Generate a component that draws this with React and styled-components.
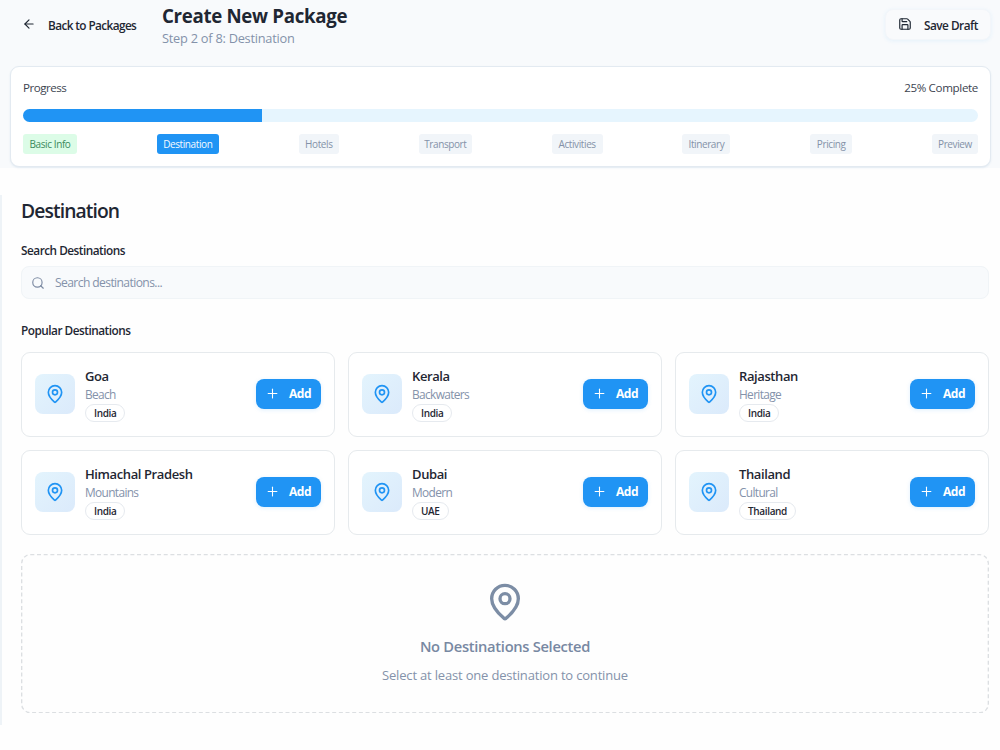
import styled, { createGlobalStyle } from 'styled-components'
import { ArrowLeft, MapPin, Plus, Save, Search } from 'lucide-react'

const GlobalStyle = createGlobalStyle`
  *,
  *::before {
    box-sizing: border-box;
  }

  body {
    background: #fefefe;
    color: #1f2733;
    font-family: 'Open Sans', 'Noto Sans', sans-serif;
    margin: 0;
  }

  button {
    border: none;
    color: inherit;
    font-family: inherit;
    margin: 0;
    padding: 0;
  }
`

const Text = styled.span`
  color: ${({ $color }) => $color || '#1f2733'};
  font-size: ${({ $size }) => $size}px;
  font-weight: ${({ $weight }) => $weight || 400};
  letter-spacing: ${({ $spacing }) => $spacing || 0}px;
  line-height: ${({ $line }) => $line || 18}px;
  margin: 0;
  white-space: nowrap;
`

const Page = styled.div`
  display: flex;
  flex-direction: column;
  gap: 27px;
  height: 750px;
  overflow: hidden;
`

const Top = styled.div`
  background: #f8fafc;
  height: 168px;
  padding: 0 9px 0 10px;
`

const Header = styled.header`
  display: flex;
  height: 66px;
  justify-content: space-between;
`

const HeaderLeft = styled.div`
  display: flex;
  gap: 25px;
`

const BackButton = styled.button`
  align-items: center;
  background: none;
  display: flex;
  gap: 12px;
  height: 30px;
  margin: 10px 0 0 12px;
  width: 115px;

  svg {
    margin-top: -2px;
  }
`

const Titles = styled.div`
  display: flex;
  flex-direction: column;
  padding-top: 3px;
`

const SaveButton = styled.button`
  align-items: center;
  background: #f9fafc;
  border: 1px solid #f3f6fa;
  border-radius: 8px;
  box-shadow: 0 1px 4px rgba(33, 150, 243, 0.09);
  display: flex;
  height: 31px;
  justify-content: space-between;
  margin-top: 9px;
  padding: 0 12px;
  width: 106px;

  svg {
    margin-top: -1px;
  }
`

const ProgressCard = styled.section`
  background: #fff;
  border: 1px solid #e3eaf1;
  border-radius: 9px;
  box-shadow: 0 1px 2px rgba(33, 100, 160, 0.1);
  display: flex;
  flex-direction: column;
  height: 101px;
  padding: 12px 12px 0;
`

const Row = styled.div`
  display: flex;
  justify-content: space-between;
`

const Track = styled.div`
  background: #e6f5fe;
  border-radius: 7px;
  height: 13px;
  margin: 11.5px 0 12.5px;
  overflow: hidden;
`

const Fill = styled.div`
  background: #2094f4;
  height: 100%;
`

const stepColors = {
  done: ['#dcfce7', '#3a8a5c'],
  current: ['#2094f4', '#f5faff'],
  next: ['#f1f5f9', '#8492a8'],
}

const StepBadge = styled.span`
  background: ${({ $state }) => stepColors[$state][0]};
  border-radius: 3px;
  color: ${({ $state }) => stepColors[$state][1]};
  font-size: 10px;
  height: 20px;
  letter-spacing: -0.4px;
  line-height: 20px;
  text-align: center;
  white-space: nowrap;
  width: ${({ $width }) => $width}px;
`

const Panel = styled.main`
  border-left: 2px solid #eef3f7;
  display: flex;
  flex-direction: column;
  height: 530px;
  padding: 0 11px 0 19px;
`

const SectionLabel = styled(Text)`
  margin-top: ${({ $top }) => $top || 0}px;
`

const SearchBox = styled.div`
  align-items: center;
  background: #f8fafc;
  border: 1px solid #f0f4f7;
  border-radius: 8px;
  display: flex;
  gap: 10px;
  height: 33px;
  margin: 7px 0 22px;
  padding: 0 9px;

  span {
    margin-top: 1px;
  }
`

const Grid = styled.div`
  display: grid;
  gap: 13px;
  grid-template-columns: repeat(3, 314px);
  grid-template-rows: 85px 85px;
  margin: 13px 0 19px;
`

const Card = styled.div`
  align-items: center;
  background: #fff;
  border: 1px solid #e6eaed;
  border-radius: 9px;
  display: flex;
  padding: 0 13px 2px;
`

const PinTile = styled.div`
  align-items: center;
  background: linear-gradient(135deg, #e3f4fd, #dbeafb);
  border-radius: 8px;
  display: flex;
  flex: none;
  height: 40px;
  justify-content: center;
  width: 40px;
`

const Info = styled.div`
  align-items: flex-start;
  display: flex;
  flex: 1;
  flex-direction: column;
  margin-left: 10px;
  padding-top: 2px;
`

const Country = styled.span`
  border: 1px solid #e6eaef;
  border-radius: 9px;
  font-size: 10px;
  font-weight: 600;
  height: 18px;
  letter-spacing: -0.35px;
  line-height: 16px;
  margin-top: 1px;
  padding: 0 8px;
`

const AddButton = styled.button`
  align-items: center;
  background: #2094f4;
  border-radius: 8px;
  box-shadow: 0 1px 4px rgba(33, 150, 243, 0.15);
  display: flex;
  height: 30px;
  justify-content: space-between;
  padding: 0 10px 0 9px;
  width: 65px;

  span {
    margin-top: 1px;
  }
`

// The dashed frame is drawn at 3:2 and scaled down, which gives finer dashes than a plain border
const Empty = styled.section`
  align-items: center;
  display: flex;
  flex-direction: column;
  height: 159px;
  padding-top: 28px;
  position: relative;

  &::before {
    border: 2px dashed #dcdfe2;
    border-radius: 14px;
    content: '';
    height: 150%;
    left: 0;
    position: absolute;
    top: 0;
    transform: scale(0.66667);
    transform-origin: 0 0;
    width: 150%;
  }
`

const EmptyTitle = styled(Text)`
  margin: 14px 0 9px;
`

const steps = [
  { label: 'Basic Info', state: 'done', width: 54 },
  { label: 'Destination', state: 'current', width: 62 },
  { label: 'Hotels', state: 'next', width: 40.5 },
  { label: 'Transport', state: 'next', width: 53 },
  { label: 'Activities', state: 'next', width: 51 },
  { label: 'Itinerary', state: 'next', width: 48 },
  { label: 'Pricing', state: 'next', width: 42 },
  { label: 'Preview', state: 'next', width: 46 },
]

const destinations = [
  { name: 'Goa', kind: 'Beach', country: 'India' },
  { name: 'Kerala', kind: 'Backwaters', country: 'India' },
  { name: 'Rajasthan', kind: 'Heritage', country: 'India' },
  { name: 'Himachal Pradesh', kind: 'Mountains', country: 'India' },
  { name: 'Dubai', kind: 'Modern', country: 'UAE' },
  { name: 'Thailand', kind: 'Cultural', country: 'Thailand' },
]

const progress = 25

const App = () => (
  <Page>
    <GlobalStyle />
    <Top>
      <Header>
        <HeaderLeft>
          <BackButton>
            <ArrowLeft size={14} />
            <Text $size={11.8} $weight={600} $spacing={-0.6}>
              Back to Packages
            </Text>
          </BackButton>
          <Titles>
            <Text as='h1' $size={18.7} $weight={700} $spacing={-0.32} $line={26}>
              Create New Package
            </Text>
            <Text $color='#8492aa' $size={12.8} $spacing={-0.25} $line={18}>
              Step 2 of 8: Destination
            </Text>
          </Titles>
        </HeaderLeft>
        <SaveButton>
          <Save size={14} />
          <Text $size={11.8} $weight={600} $spacing={-0.5}>
            Save Draft
          </Text>
        </SaveButton>
      </Header>
      <ProgressCard>
        <Row>
          <Text $color='#3c4450' $size={11.6} $spacing={-0.5}>
            Progress
          </Text>
          <Text $color='#3c4450' $size={11.6} $spacing={-0.35}>
            {progress}% Complete
          </Text>
        </Row>
        <Track>
          <Fill style={{ width: `${progress}%` }} />
        </Track>
        <Row>
          {steps.map(({ label, state, width }) => (
            <StepBadge key={label} $state={state} $width={width}>
              {label}
            </StepBadge>
          ))}
        </Row>
      </ProgressCard>
    </Top>
    <Panel>
      <Text as='h2' $size={19.3} $weight={600} $spacing={-0.9} $line={31}>
        Destination
      </Text>
      <SectionLabel $top={15} $size={11.8} $weight={600} $spacing={-0.5}>
        Search Destinations
      </SectionLabel>
      <SearchBox>
        <Search size={14} color='#7d8ba3' />
        <Text $color='#8492aa' $size={12.1} $spacing={-0.6}>
          Search destinations...
        </Text>
      </SearchBox>
      <SectionLabel $size={11.8} $weight={600} $spacing={-0.5}>
        Popular Destinations
      </SectionLabel>
      <Grid>
        {destinations.map(({ country, kind, name }) => (
          <Card key={name}>
            <PinTile>
              <MapPin size={20} color='#2094f4' />
            </PinTile>
            <Info>
              <Text $size={13} $weight={600} $spacing={-0.4}>
                {name}
              </Text>
              <Text $color='#8492aa' $size={11.9} $spacing={-0.65}>
                {kind}
              </Text>
              <Country>{country}</Country>
            </Info>
            <AddButton>
              <Plus size={15} color='#fff' strokeWidth={1.7} />
              <Text $color='#fff' $size={12} $weight={700} $spacing={-0.5}>
                Add
              </Text>
            </AddButton>
          </Card>
        ))}
      </Grid>
      <Empty>
        <MapPin size={40} color='#7c8da5' />
        <EmptyTitle $color='#7888a2' $size={14.7} $weight={600} $spacing={-0.3} $line={20}>
          No Destinations Selected
        </EmptyTitle>
        <Text $color='#8492aa' $size={13} $spacing={-0.18} $line={20}>
          Select at least one destination to continue
        </Text>
      </Empty>
    </Panel>
  </Page>
)

export default App
